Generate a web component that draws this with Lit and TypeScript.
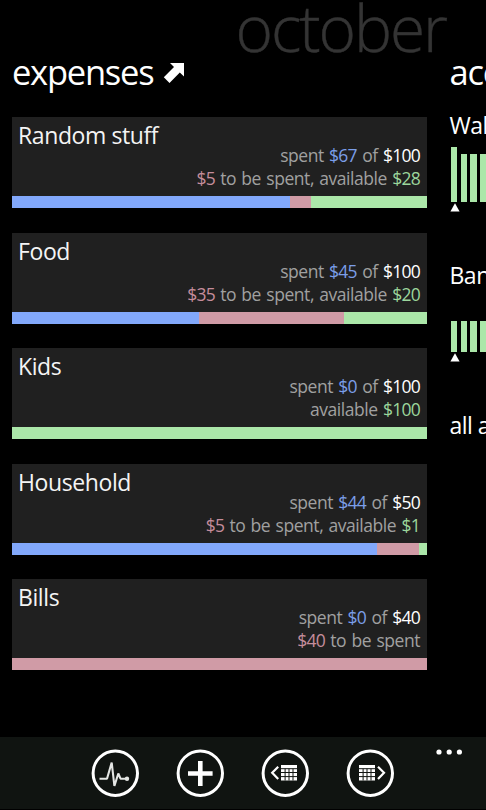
import { LitElement, html, css, svg, nothing } from "lit";
import { customElement, property } from "lit/decorators.js";

interface Expense {
  name: string;
  spent: number;
  planned: number;
  budget: number;
}

const EXPENSES: Expense[] = [
  { name: "Random stuff", spent: 67, planned: 5, budget: 100 },
  { name: "Food", spent: 45, planned: 35, budget: 100 },
  { name: "Kids", spent: 0, planned: 0, budget: 100 },
  { name: "Household", spent: 44, planned: 5, budget: 50 },
  { name: "Bills", spent: 0, planned: 40, budget: 40 },
];

@customElement("expense-card")
class ExpenseCard extends LitElement {
  @property({ attribute: false }) expense!: Expense;

  static styles = css`
    :host {
      display: flex;
      flex-direction: column;
      box-sizing: border-box;
      height: 91.1px;
      background: #202020;
      color: #a0a0a0;
    }
    .name {
      margin: 0 0 0 6px;
      height: 27px;
      line-height: 37px;
      font-size: 23px;
      font-weight: 400;
      letter-spacing: -0.4px;
      color: #f4f4f4;
    }
    .lines {
      flex: 1;
      padding: 0 7px 0 0;
      text-align: right;
      font-size: 17.5px;
      line-height: 23.2px;
      letter-spacing: -0.45px;
      word-spacing: 1.2px;
      white-space: nowrap;
    }
    .spent, .planned, .free, .total { letter-spacing: -0.75px; }
    .spent { color: #7b9ee8; }
    .planned { color: #c58d9c; }
    .free { color: #9cd69c; }
    .total { color: #fff; }
    .bar { display: flex; height: 12px; background: #abe7a9; }
    .bar-spent { background: #82a8fb; }
    .bar-planned { background: #d09ba6; }
  `;

  render() {
    const { name, spent, planned, budget } = this.expense;
    const free = budget - spent - planned;
    return html`
      <h2 class="name">${name}</h2>
      <div class="lines">
        <div>spent <span class="spent">$${spent}</span> of <span class="total">$${budget}</span></div>
        <div>${planned ? html`<span class="planned">$${planned}</span> to be spent` : nothing}${planned && free ? ", " : nothing}${free ? html`available <span class="free">$${free}</span>` : nothing}</div>
      </div>
      <div class="bar">
        <div class="bar-spent" style="width:${(spent / budget) * 100}%"></div>
        <div class="bar-planned" style="width:${(planned / budget) * 100}%"></div>
      </div>
    `;
  }
}

@customElement("balance-chart")
class BalanceChart extends LitElement {
  @property({ attribute: false }) values: number[] = [];

  static styles = css`
    :host { display: block; }
    .bars { display: flex; align-items: flex-end; gap: 3.5px; height: 55px; }
    .bar { flex: none; width: 6.2px; background: #abe7a9; }
    .marker { display: block; margin: 1px 0 0 -1.5px; }
  `;

  render() {
    return html`
      <div class="bars">${this.values.map((v) => html`<div class="bar" style="height:${v}px"></div>`)}</div>
      <svg class="marker" width="10" height="9" viewBox="0 0 10 9"><path d="M5 .3 9.6 8.5H.4z" fill="#fff" /></svg>
    `;
  }
}

const calendar = (x: number) => svg`
  <g transform="translate(${x} 16)">
    <path d="M0 0H16V15.5H0z" fill="#fff" />
    <path d="M0 3.7H16M0 7.5H16M0 11.6H16M4.1 3.7V15.5M8 3.7V15.5M12 3.7V15.5" stroke="#101411" stroke-width="1" />
  </g>`;

const ICONS = [
  svg`<path d="M8.5 29.7H16L20.7 13.5 23.4 37 27.3 24.5 29.5 29.7H36" fill="none" stroke="#e4e6e4" stroke-width="2.1" stroke-linejoin="bevel" /><circle cx="36" cy="29.7" r="2.2" fill="#e4e6e4" />`,
  svg`<path d="M24.3 12V37M12 24.5H36.6" stroke="#fff" stroke-width="4.6" />`,
  svg`<path d="M17.2 17.8 11.2 23.7 17.2 30" fill="none" stroke="#fff" stroke-width="2.2" />${calendar(20)}`,
  svg`${calendar(13)}<path d="M32 17.8 38 23.7 32 30" fill="none" stroke="#fff" stroke-width="2.2" />`,
];

@customElement("app-root")
class AppRoot extends LitElement {
  static styles = css`
    :host {
      display: flex;
      flex-direction: column;
      position: relative;
      width: 486px;
      height: 810px;
      overflow: hidden;
      background: #000;
      color: #fff;
      font-family: "Open Sans", "Noto Sans", sans-serif;
    }
    .month {
      flex: none;
      height: 52px;
      margin: 0 0 0 235.5px;
      line-height: 55px;
      font-size: 64px;
      font-weight: 300;
      letter-spacing: -2.1px;
      color: #343434;
      -webkit-text-stroke: 0.4px #343434;
    }
    .panes { display: flex; flex: 1; min-height: 0; }
    .expenses { flex: none; width: 415px; margin-left: 12px; }
    .accounts { flex: none; width: 200px; margin-left: 22.5px; }
    .heading {
      display: flex;
      align-items: center;
      gap: 10px;
      height: 40px;
      margin: 0;
      font-size: 34.5px;
      font-weight: 400;
      letter-spacing: -1.25px;
      line-height: 40px;
    }
    .arrow { display: block; margin-top: 2px; }
    .cards { display: flex; flex-direction: column; gap: 24.4px; margin-top: 25.2px; }
    .account { display: block; margin: 0; height: 28px; line-height: 28px; font-size: 23px; font-weight: 400; letter-spacing: -0.5px; white-space: nowrap; }
    .wallet { margin-top: 19px; }
    .bank { margin-top: 49px; }
    .all { margin-top: 49px; }
    .first { margin: 8.4px 0 0 1.5px; }
    .second { margin: 8px 0 0 1.5px; }
    .appbar {
      flex: none;
      display: flex;
      box-sizing: border-box;
      height: 73px;
      padding: 12px 0 0 91px;
      gap: 37px;
      background: #101411;
      border-bottom: 1px solid #000;
    }
    .button { display: block; flex: none; }
    .more { display: block; flex: none; margin: -0.4px 0 0 4.6px; }
  `;

  render() {
    return html`
      <h1 class="month">october</h1>
      <div class="panes">
        <section class="expenses">
          <h2 class="heading">
            <span>expenses</span>
            <svg class="arrow" width="22" height="22" viewBox="0 0 22 22"><path d="M7 1H21V14.5L16.8 10.6 6.5 21 .8 15.2 11 5z" fill="#fff" /></svg>
          </h2>
          <div class="cards">
            ${EXPENSES.map((e) => html`<expense-card .expense=${e}></expense-card>`)}
          </div>
        </section>
        <section class="accounts">
          <h2 class="heading">accounts</h2>
          <h3 class="account wallet">Wallet</h3>
          <balance-chart class="first" .values=${[55, 48, 48, 48]}></balance-chart>
          <h3 class="account bank">Bank</h3>
          <balance-chart class="second" .values=${[31.5, 31.5, 31.5, 31.5]}></balance-chart>
          <h3 class="account all">all accounts</h3>
        </section>
      </div>
      <nav class="appbar">
        ${ICONS.map((icon) => html`
          <svg class="button" width="48" height="48" viewBox="0 0 48 48">
            <circle cx="24.3" cy="24.2" r="22.2" fill="none" stroke="#fff" stroke-width="3" />
            ${icon}
          </svg>`)}
        <svg class="more" width="28" height="6" viewBox="0 0 28 6">
          <g fill="#fff"><circle cx="3" cy="3" r="2.6" /><circle cx="13.2" cy="3" r="2.6" /><circle cx="23.4" cy="3" r="2.6" /></g>
        </svg>
      </nav>
    `;
  }
}
